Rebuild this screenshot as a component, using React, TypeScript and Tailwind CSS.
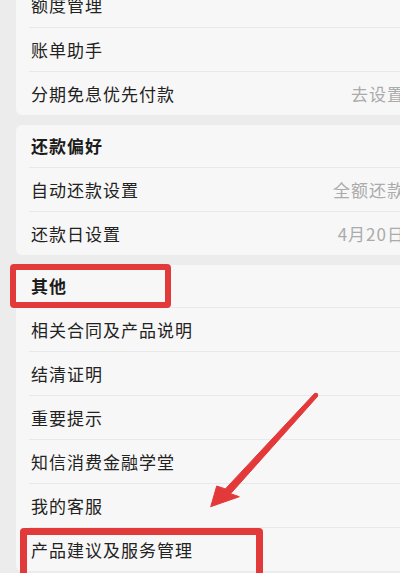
const font = { fontFamily: '"Noto Sans CJK SC", "Noto Sans", sans-serif' }

type Row = { label: string; value?: string }

function Card({ title, rows, className = "" }: { title?: string; rows: Row[]; className?: string }) {
  return (
    <div className={`w-[410px] ml-4 bg-[#f7f7f7] rounded-md ${className}`}>
      {title && (
        <div className="h-[42px] flex items-center pl-[15px] text-[17px] tracking-[1px] font-bold text-[#1c1c1c]">
          {title}
        </div>
      )}
      {rows.map((r, i) => (
        <div key={r.label} className="ml-[13px]">
          <div
            className={`h-11 flex items-center justify-between pl-[2px] pr-[21px] ${
              i > 0 || title ? "border-t border-[#e9e9e9]" : ""
            }`}
          >
            <span className="text-[17px] tracking-[1px] text-[#222]">{r.label}</span>
            {r.value && <span className="text-[17px] tracking-[1px] text-[#ababab]">{r.value}</span>}
          </div>
        </div>
      ))}
    </div>
  )
}

export default function App() {
  return (
    <div className="relative w-[400px] h-[573px] overflow-hidden bg-[#ececec]" style={font}>
      <div className="flex flex-col gap-[10px] -mt-[17px]">
        <Card
          className="rounded-t-none"
          rows={[
            { label: "额度管理" },
            { label: "账单助手" },
            { label: "分期免息优先付款", value: "去设置" },
          ]}
        />
        <Card
          title="还款偏好"
          rows={[
            { label: "自动还款设置", value: "全额还款" },
            { label: "还款日设置", value: "4月20日" },
          ]}
        />
        <Card
          title="其他"
          rows={[
            { label: "相关合同及产品说明" },
            { label: "结清证明" },
            { label: "重要提示" },
            { label: "知信消费金融学堂" },
            { label: "我的客服" },
            { label: "产品建议及服务管理" },
          ]}
        />
      </div>

      {/* 标注框 */}
      <div className="absolute left-[10px] top-[264px] w-[161px] h-[44px] border-[6px] border-[#e23a3b] rounded-[4px]" />
      <div className="absolute left-[20px] top-[528px] w-[243px] h-[52px] border-[7px] border-[#e23a3b] rounded-[4px]" />

      {/* 箭头 */}
      <svg className="absolute inset-0 pointer-events-none" width={400} height={573} viewBox="0 0 400 573">
        <polygon
          points="314.5,393.6 317.5,396.4 230.6,493.7 239.3,496.7 210.7,506.7 216.7,486 225.4,488.9"
          fill="#e3393a"
          strokeLinejoin="round"
          stroke="#e3393a"
          strokeWidth={1}
        />
        <circle cx={316} cy={395} r={2.2} fill="#e3393a" />
      </svg>
    </div>
  )
}
